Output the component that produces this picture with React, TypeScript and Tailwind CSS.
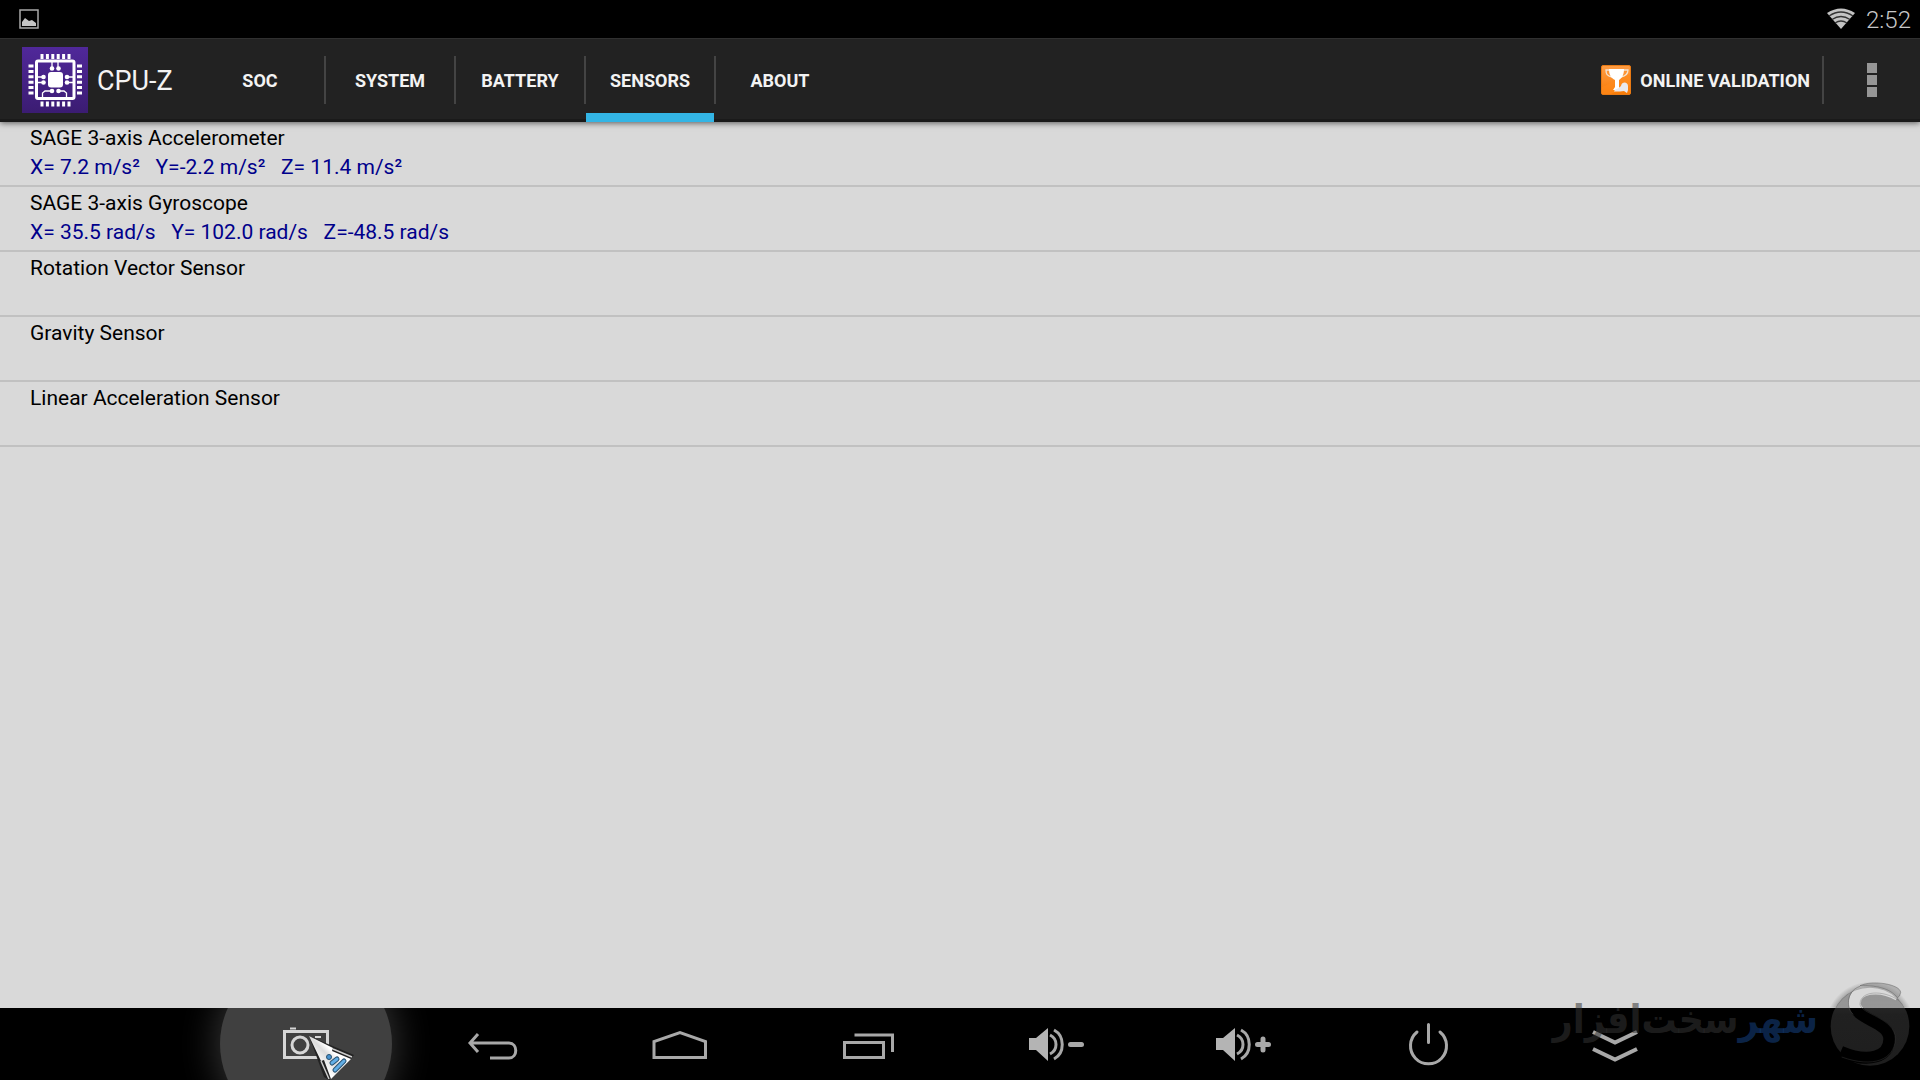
import type { ReactNode } from "react";

const tabs = ["SOC", "SYSTEM", "BATTERY", "SENSORS", "ABOUT"];
const activeTab = "SENSORS";

const sensors = [
  {
    name: "SAGE 3-axis Accelerometer",
    value: "X= 7.2 m/s²   Y=-2.2 m/s²   Z= 11.4 m/s²",
  },
  {
    name: "SAGE 3-axis Gyroscope",
    value: "X= 35.5 rad/s   Y= 102.0 rad/s   Z=-48.5 rad/s",
  },
  { name: "Rotation Vector Sensor", value: "" },
  { name: "Gravity Sensor", value: "" },
  { name: "Linear Acceleration Sensor", value: "" },
];

const Speaker = () => (
  <>
    <path d="M11 30h7L30 20v33L18 42h-7z" fill="#b4b4b4" stroke="none" />
    <path d="M32 27c8 4 8 15 0 19M36 22c11 6 11 23 0 29" />
  </>
);

const navItems: { label: string; icon: ReactNode }[] = [
  {
    label: "Screenshot",
    icon: (
      <g stroke="#d6d6d6">
        <rect x="14.5" y="23.5" width="43" height="26" />
        <circle cx="30" cy="37" r="8" />
        <path d="M20 20.5h6M45 29h6" strokeWidth="2" />
      </g>
    ),
  },
  {
    label: "Back",
    icon: <path d="M21 26l-8 9 8 9M13 35h39c9 0 9 15 0 15H33" />,
  },
  { label: "Home", icon: <path d="M10 33.500V49.500h51.500V33.500L36 24.500z" /> },
  {
    label: "Recent apps",
    icon: <path d="M13.500 34.500h39v15h-39zM23.500 27h38v17" />,
  },
  {
    label: "Volume down",
    icon: (
      <>
        <Speaker />
        <path d="M52.500 36.500h11" strokeWidth="5" strokeLinecap="round" />
      </>
    ),
  },
  {
    label: "Volume up",
    icon: (
      <>
        <Speaker />
        <path d="M52.500 36.500h11M58 31v11" strokeWidth="5" strokeLinecap="round" />
      </>
    ),
  },
  {
    label: "Power",
    icon: (
      <path d="M36.500 16.500v18M25 24a18 18 0 1 0 23 0" strokeLinecap="round" />
    ),
  },
  {
    label: "Hide bar",
    icon: <path d="M14 24l22 10.500L58 24M14 41l22 10.500L58 41" strokeWidth="4" />,
  },
];

function ChipIcon() {
  return (
    <svg className="size-[66px] shrink-0" viewBox="0 0 66 66" aria-hidden="true">
      <defs>
        <linearGradient id="chip" x1="0" y1="0" x2="0" y2="1">
          <stop offset="0" stopColor="#50289a" />
          <stop offset="1" stopColor="#3b1c72" />
        </linearGradient>
      </defs>
      <rect width="66" height="66" fill="url(#chip)" />
      {/* Pins */}
      <g stroke="#fff" strokeWidth="5" strokeDasharray="3 2.400">
        <path d="M18.500 9.500h30.500M18.500 57h30.500M9 17.500v31M57.500 17.500v31" />
      </g>
      <rect x="14.500" y="14" width="37.500" height="37.500" rx="1.500" fill="none" stroke="#fff" strokeWidth="3" />
      <rect x="26" y="25" width="15" height="15.500" rx="3" fill="#fff" />
      {/* Traces */}
      <g fill="none" stroke="#fff" strokeWidth="1.300">
        <path d="M30 15v6M36 15v6M15 30h6M15 35.500h6M45 30h7M45 35.500h7M30 44h-7l-2.500 2v5M36 44h6l2.500 2v5" />
      </g>
      <g fill="#fff">
        <circle cx="30" cy="21.500" r="2.300" />
        <circle cx="36.500" cy="21.500" r="2.300" />
        <circle cx="21.500" cy="30" r="2.300" />
        <circle cx="21.500" cy="35.500" r="2.300" />
        <circle cx="45" cy="30" r="2.300" />
        <circle cx="45" cy="35.500" r="2.300" />
        <circle cx="30" cy="44" r="2.300" />
        <circle cx="36.500" cy="44" r="2.300" />
      </g>
    </svg>
  );
}

function TrophyIcon() {
  return (
    <svg className="size-[30px]" viewBox="0 0 30 30" aria-hidden="true">
      <defs>
        <linearGradient id="trophy" x1="0" y1="0" x2="0" y2="1">
          <stop offset="0" stopColor="#ff9d45" />
          <stop offset="1" stopColor="#f77b06" />
        </linearGradient>
      </defs>
      <rect x="0.500" y="0.500" width="29" height="29" rx="1.500" fill="url(#trophy)" stroke="#e97a13" />
      <path d="M1 22L29 9v11L10 29H1z" fill="#ff8b1c" opacity=".6" />
      <path d="M8 5H5c0 4 1 6 6 7M22 5h5c0 4-2 6-7 7" fill="none" stroke="#f3e4d3" strokeWidth="1.300" />
      <path d="M8 4h15c0 6-2 9-5 11v7l2 3h-8l2-3v-7C10 13 8 10 8 4z" fill="#fff" />
      <path d="M20 21c1-5 7-4 7 0v4l-1 3-3-2-4 .5h-6c1-3 4-2 7-5.500z" fill="#e9e9ee" />
    </svg>
  );
}

function Pointer() {
  return (
    <svg className="pointer-events-none absolute top-7 left-24 h-11 w-12" viewBox="0 0 48 44" aria-hidden="true">
      <defs>
        <linearGradient id="pointer" x1="0" y1="1" x2="1" y2="0">
          <stop offset=".3" stopColor="#fff" />
          <stop offset=".5" stopColor="#dcdcdc" />
          <stop offset=".6" stopColor="#fff" />
        </linearGradient>
      </defs>
      <path d="M1 0L46 19l-3 4-22 21-5-3z" fill="#222" />
      <path d="M1 0L25 12l-1 3 19 8-20 20-7-19-3 1z" fill="url(#pointer)" />
      <path d="M25 13l19 8M13 25l8 18" stroke="#ccc" strokeWidth="1.500" />
      <circle cx="21" cy="21" r="2.500" fill="#4893d0" stroke="#27506f" />
      <g strokeLinecap="round">
        <path d="M24 27l5-4M27 34l9-9" stroke="#27506f" strokeWidth="5" />
        <path d="M24 27l5-4M27 34l9-9" stroke="#62aee6" strokeWidth="3" />
      </g>
    </svg>
  );
}

function Watermark() {
  return (
    <div className="pointer-events-none absolute right-0 bottom-[7px] z-20 flex items-center gap-0.5">
      <p
        dir="rtl"
        lang="fa"
        className="pb-1.5 font-['DejaVu_Sans_Condensed','DejaVu_Sans',sans-serif] text-[39px] leading-[50px] font-bold whitespace-nowrap text-[#343434]/55"
      >
        <span className="text-[#164385]/55">شهر</span>سخت‌افزار
      </p>
      <svg className="size-[100px]" viewBox="900 40 300 300" aria-hidden="true">
        <defs>
          <linearGradient id="ball" x1="0" y1="0" x2="0" y2="1">
            <stop offset="0" stopColor="#606060" stopOpacity=".55" />
            <stop offset=".35" stopColor="#484848" stopOpacity=".45" />
            <stop offset="1" stopColor="#3c3c3c" stopOpacity=".5" />
          </linearGradient>
          <radialGradient id="halo">
            <stop offset=".82" stopColor="#333" stopOpacity=".4" />
            <stop offset="1" stopColor="#333" stopOpacity="0" />
          </radialGradient>
          <mask id="swirl">
            <rect x="900" y="40" width="300" height="300" fill="#fff" />
            <path
              d="M1136 106C1080 74 1002 80 1004 134C1008 182 1108 184 1108 238C1108 292 1046 312 962 276"
              fill="none"
              stroke="#000"
              strokeWidth="36"
            />
          </mask>
          <mask id="rim">
            <rect x="900" y="40" width="300" height="104" fill="#fff" />
            <circle cx="1050" cy="200" r="116" fill="#000" />
          </mask>
        </defs>
        <circle cx="1050" cy="200" r="134" fill="url(#halo)" mask="url(#rim)" />
        <circle cx="1050" cy="200" r="118" fill="url(#ball)" mask="url(#swirl)" />
        <g fill="none" stroke="#555" strokeOpacity=".45" strokeWidth="3">
          <path d="M1136 122C1090 90 1020 92 1020 134C1022 164 1126 174 1126 238C1124 300 1060 326 965 292" strokeOpacity=".3" />
          <path d="M1020 80C975 95 980 150 1000 164" />
          <path d="M1020 78C1060 60 1140 74 1142 98Q1140 112 1132 114C1116 92 1080 76 1020 78z" fill="#888" fillOpacity=".5" />
        </g>
      </svg>
    </div>
  );
}

export default function App() {
  return (
    <div className="relative flex min-h-screen flex-col overflow-hidden bg-[#d9d9d9] font-[Roboto,sans-serif]">
      {/* Status bar */}
      <div className="flex h-[38px] items-center justify-between bg-black pr-[9px] pl-[19px] text-[#c8c8c8]">
        <svg className="size-5" viewBox="0 0 20 20" aria-hidden="true">
          <rect x="1" y="1" width="18" height="18" fill="none" stroke="#a9a9a9" strokeWidth="1.500" />
          <path d="M3 17v-4l3-4 4 3 3-1 4 3v3z" fill="#c4c4c4" />
        </svg>
        <div className="flex items-center gap-[10px]">
          <svg className="h-6 w-[30px]" viewBox="0 0 30 24" aria-hidden="true">
            <path d="M1 6Q15-3 29 6L15 22z" fill="#c4c4c4" />
            <path d="M3 9q12-8 24 0M6 12.500q9-6 18 0M9 16q6-4 12 0" fill="none" stroke="#333" strokeWidth="1.300" />
          </svg>
          <span className="pt-0.5 text-[24px] leading-7 font-light">2:52</span>
        </div>
      </div>

      {/* Action bar */}
      <header className="relative z-10 flex h-[84px] items-center bg-[#222] pl-[22px] text-[#f3f3f3] shadow-[0_1px_6px_rgba(0,0,0,0.6),inset_0_1px_#303030,inset_0_-3px_#1a1a1a]">
        <ChipIcon />
        <h1 className="w-[108px] pt-0.5 pl-[9px] text-[27px] leading-8 font-normal">CPU-Z</h1>
        <nav className="flex h-[84px] items-center">
          {tabs.map((tab, i) => (
            <div key={tab} className="flex items-center">
              {i > 0 && <span className="h-12 w-0.5 bg-[#444]" />}
              <button
                className={`relative h-[84px] w-32 pt-0.5 text-[18px] leading-6 font-bold ${
                  tab === activeTab
                    ? "after:absolute after:inset-x-0 after:bottom-0 after:h-[9px] after:bg-[#33b5e5]"
                    : ""
                }`}
              >
                {tab}
              </button>
            </div>
          ))}
        </nav>
        <button className="ml-auto flex h-20 items-center gap-[9px] pr-3 text-[18px] leading-6 font-bold">
          <TrophyIcon />
          <span className="pt-0.5">ONLINE VALIDATION</span>
        </button>
        <span className="h-12 w-0.5 bg-[#444]" />
        <button aria-label="More options" className="flex h-20 w-24 flex-col items-center justify-center gap-0.5">
          <span className="size-[10px] bg-[#969696]" />
          <span className="size-[10px] bg-[#969696]" />
          <span className="size-[10px] bg-[#969696]" />
        </button>
      </header>

      {/* Sensor list */}
      <main className="grow">
        <ul>
          {sensors.map((sensor) => (
            <li
              key={sensor.name}
              className="h-[65px] border-b-2 border-[#c1c1c1] px-[30px] pt-0.5 text-[21px] leading-[29px] whitespace-pre text-black"
            >
              <p>{sensor.name}</p>
              <p className="text-[#00008b]">{sensor.value}</p>
            </li>
          ))}
        </ul>
      </main>

      {/* Navigation bar */}
      <nav className="flex h-[72px] overflow-hidden bg-black px-53">
        {navItems.map((item, i) => (
          <div key={item.label} className="relative flex flex-1 justify-center">
            {i === 0 && (
              <span className="absolute -top-[50px] left-1/2 size-[172px] -translate-x-1/2 rounded-full bg-[#404040] shadow-[0_0_36px_4px_#333]" />
            )}
            <button aria-label={item.label} className="relative">
              <svg
                className="size-[72px]"
                viewBox="0 0 72 72"
                fill="none"
                stroke="#a8a8a8"
                strokeWidth="3"
                aria-hidden="true"
              >
                {item.icon}
              </svg>
            </button>
            {i === 0 && <Pointer />}
          </div>
        ))}
      </nav>

      <Watermark />
    </div>
  );
}
